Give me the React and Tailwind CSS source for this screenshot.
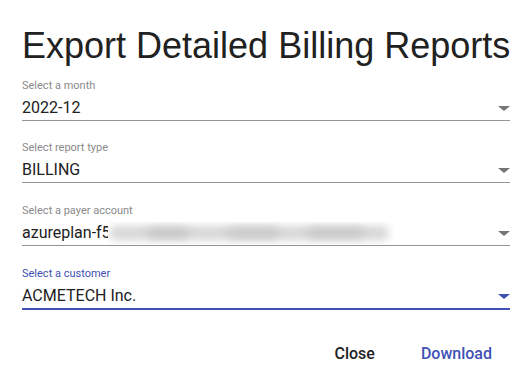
import React from "react";

function Arrow({ blue }) {
  return (
    <svg width="24" height="24" viewBox="0 0 24 24" className="shrink-0">
      <path d="M6 10l6 5 6-5z" fill={blue ? "#3f51b5" : "#757575"} />
    </svg>
  );
}

function Blur() {
  return (
    <span className="relative -ml-[3px] block h-[19px] w-[290px]">
      <span className="absolute -top-[1px] left-0 h-[22px] w-[290px] overflow-hidden bg-white">
        <span className="absolute left-[2px] right-[10px] top-[4px] h-[14px] rounded bg-[#d6d6d6] blur-[4px]" />
        <span className="absolute left-[40px] top-[6px] h-[10px] w-[40px] rounded bg-[#c8c8c8] blur-[4px]" />
        <span className="absolute left-[120px] top-[6px] h-[10px] w-[50px] rounded bg-[#cacaca] blur-[4px]" />
        <span className="absolute left-[200px] top-[6px] h-[10px] w-[55px] rounded bg-[#c9c9c9] blur-[4px]" />
      </span>
    </span>
  );
}

function Field({ label, value, focused, blurred, mt }) {
  return (
    <div className={mt}>
      <div
        className={
          "text-[11px] leading-[13px] " +
          (focused ? "text-[#3f51b5]" : "text-[#8a8a8a]")
        }
      >
        {label}
      </div>
      <div
        className={
          "mt-[6px] flex items-center justify-between pb-[3px] " +
          (focused
            ? "border-b-2 border-[#3f51b5]"
            : "border-b border-[#949494]")
        }
      >
        <div className="flex items-center text-[16px] leading-[19px] text-[#212121]">
          <span>{value}</span>
          {blurred && <Blur />}
        </div>
        <div className="-mr-[6px] -my-[4px]">
          <Arrow blue={focused} />
        </div>
      </div>
    </div>
  );
}

export default function App() {
  return (
    <div
      className="h-[378px] w-[531px] overflow-hidden bg-white pl-[22px] pr-[21px]"
      style={{ fontFamily: "Roboto, 'Liberation Sans', sans-serif" }}
    >
      <h1
        className="-mr-[21px] whitespace-nowrap pt-[25px] text-[36px] leading-[42px] font-normal text-[#212121]"
        style={{ fontFamily: "'Liberation Sans', Arial, sans-serif" }}
      >
        Export Detailed Billing Reports
      </h1>
      <Field label="Select a month" value="2022-12" mt="mt-[12px]" />
      <Field label="Select report type" value="BILLING" mt="mt-[20px]" />
      <Field
        label="Select a payer account"
        value="azureplan-f5"
        blurred
        mt="mt-[21px]"
      />
      <Field
        label="Select a customer"
        value="ACMETECH Inc."
        focused
        mt="mt-[21px]"
      />
      <div className="mt-[34px] flex justify-end gap-[46px] pr-[18px] text-[16px] font-medium leading-[19px]">
        <button className="text-[#212121]">Close</button>
        <button className="text-[#3f51b5]">Download</button>
      </div>
    </div>
  );
}
